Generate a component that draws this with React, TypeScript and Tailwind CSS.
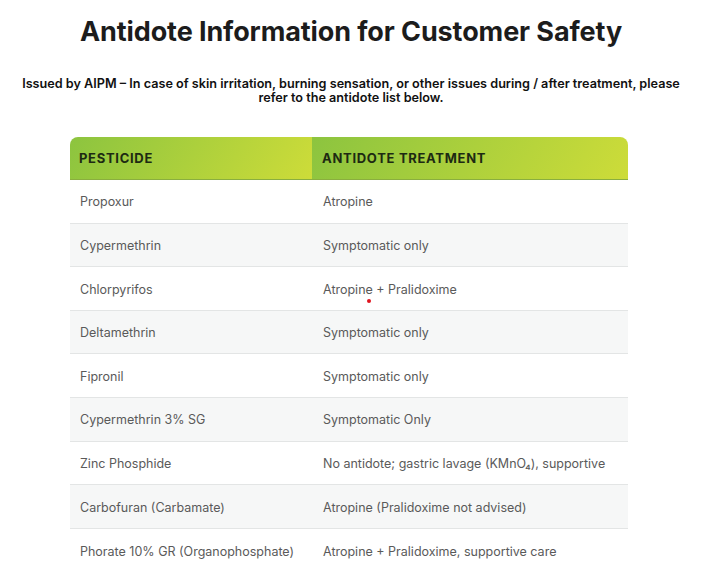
const rows: [string, string][] = [
  ["Propoxur", "Atropine"],
  ["Cypermethrin", "Symptomatic only"],
  ["Chlorpyrifos", "Atropine + Pralidoxime"],
  ["Deltamethrin", "Symptomatic only"],
  ["Fipronil", "Symptomatic only"],
  ["Cypermethrin 3% SG", "Symptomatic Only"],
  ["Zinc Phosphide", "No antidote; gastric lavage (KMnO\u2084), supportive"],
  ["Carbofuran (Carbamate)", "Atropine (Pralidoxime not advised)"],
  ["Phorate 10% GR (Organophosphate)", "Atropine + Pralidoxime, supportive care"],
];

export default function App() {
  return (
    <main className="relative min-h-[583px] bg-white font-['Inter',sans-serif] text-[#1b1b1b]">
      <h1 className="pt-[14px] text-center text-[27px] font-bold leading-[36px] tracking-[-0.1px] text-[#1c1c1c]">
        Antidote Information for Customer Safety
      </h1>

      <p className="mx-auto mt-[27px] max-w-[660px] text-center text-[12.65px] font-semibold leading-[14px] text-[#111]">
        Issued by AIPM – In case of skin irritation, burning sensation, or other issues during / after treatment, please
        refer to the antidote list below.
      </p>

      <section className="ml-[70px] mt-[32px] w-[558px]">
        <div className="flex h-[43px] overflow-hidden rounded-t-[8px] border-b border-[#8aae3f] text-[13px] font-bold uppercase tracking-[0.7px] text-[#1d2a12]">
          <div className="flex w-[242px] items-center bg-[linear-gradient(120deg,#8cc43f_0%,#cddc39_100%)] pl-[9px] pt-[2px]">
            Pesticide
          </div>
          <div className="flex flex-1 items-center bg-[linear-gradient(120deg,#8cc43f_0%,#cddc39_100%)] pl-[10px] pt-[2px]">
            Antidote Treatment
          </div>
        </div>

        {rows.map(([pesticide, antidote], i) => (
          <div
            key={pesticide + i}
            className={`flex h-[43.6px] items-center border-b border-[#e3e5e5] pt-[3px] text-[12.5px] text-[#5a5a5a] ${
              i % 2 === 1 ? "bg-[#f6f7f7]" : "bg-white"
            } ${i === rows.length - 1 ? "border-b-0" : ""}`}
          >
            <div className="w-[242px] pl-[10px]">{pesticide}</div>
            <div className="flex-1 pl-[11px]">{antidote}</div>
          </div>
        ))}
      </section>

      <span className="absolute left-[367px] top-[299px] h-[4px] w-[4px] rounded-full bg-[#e0141e]" />
    </main>
  );
}
